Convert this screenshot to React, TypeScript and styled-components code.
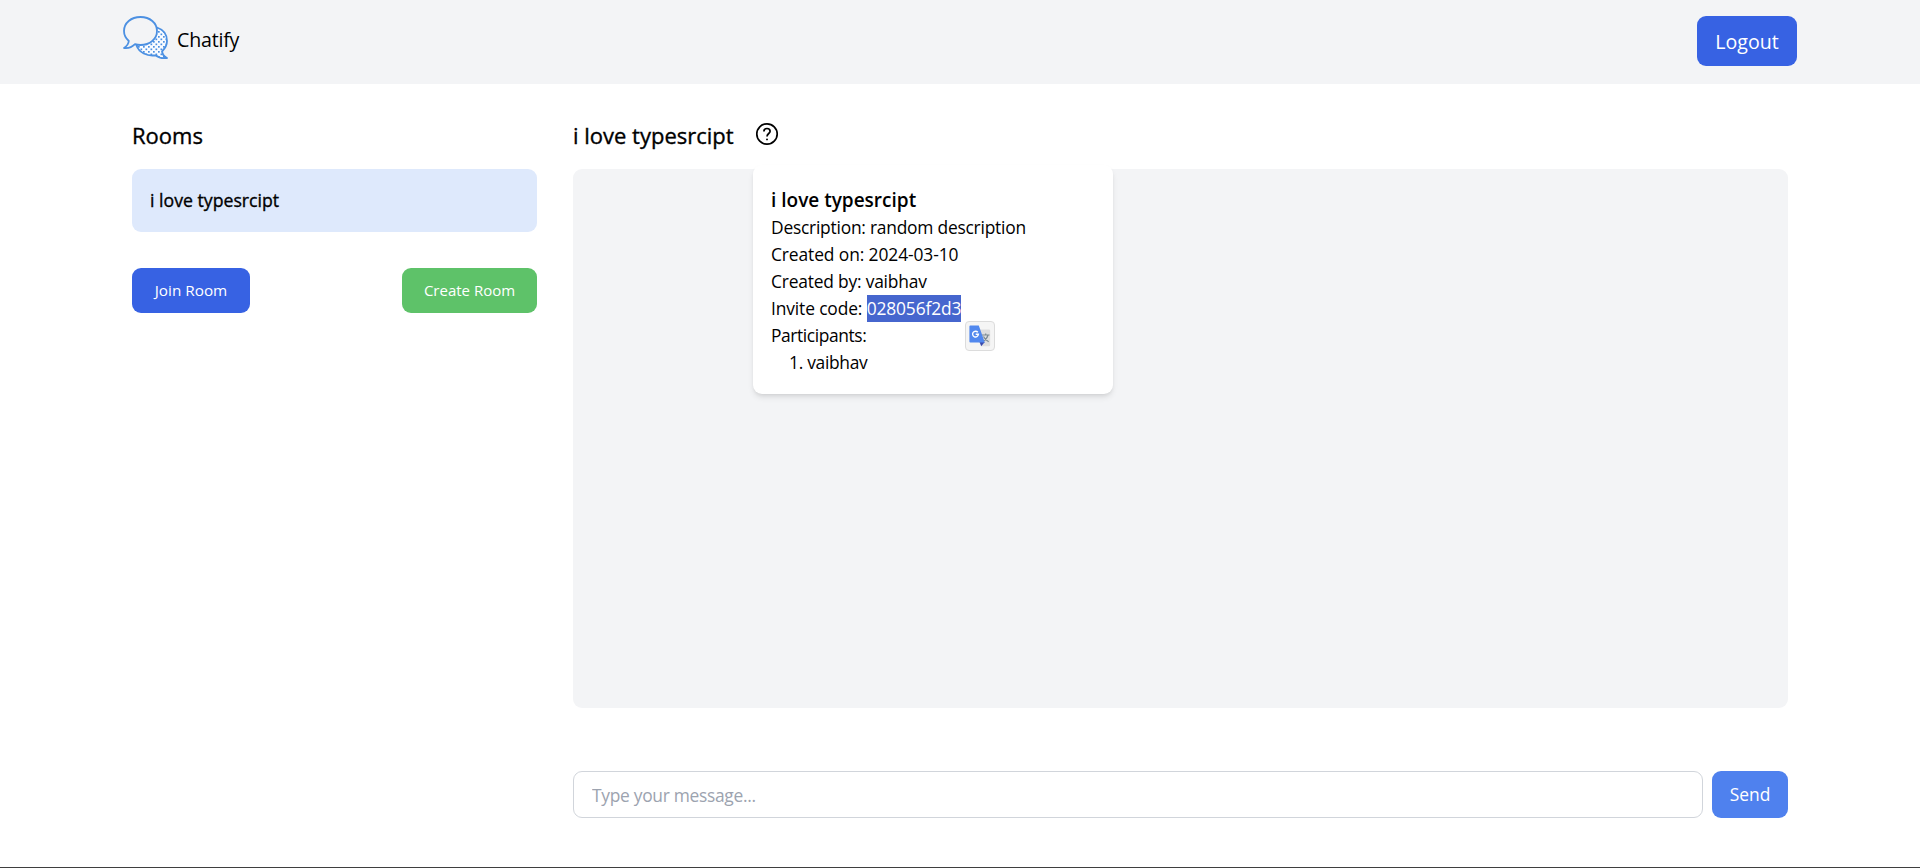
import React from "react";
import styled, { createGlobalStyle, css } from "styled-components";

const GlobalStyle = createGlobalStyle`
  *, *::before, *::after { box-sizing: border-box; }
  body { margin: 0; background: #fff; color: #000; font-family: "Open Sans", "Noto Sans", sans-serif; font-size: 17.4px; line-height: 27px; }
  h1, h2, h3, p, ul, ol { margin: 0; padding: 0; font-weight: 400; }
  button, input { font: inherit; margin: 0; }
`;

const Page = styled.div`
  height: 868px;
  display: flex;
  flex-direction: column;
  border-bottom: 1px solid #3f3f3f;
  overflow: hidden;
`;

const Header = styled.header`
  height: 84px;
  flex: none;
  display: flex;
  align-items: flex-start;
  justify-content: space-between;
  padding: 16px 123px 0;
  background: #f3f4f6;
`;

const Brand = styled.div`
  display: flex;
  align-items: center;
  gap: 9px;
`;

const BrandName = styled.h1`
  font-size: 19.6px;
  line-height: 32px;
  margin-top: 3px;
  letter-spacing: -0.2px;
`;

type Tone = "primary" | "success" | "light";
const tones: Record<Tone, string> = { primary: "#3762e3", success: "#5ec269", light: "#4f81ee" };

const Button = styled.button<{ $tone: Tone; $width: number; $height: number; $size: number; $drop?: number }>`
  width: ${(p) => p.$width}px;
  height: ${(p) => p.$height}px;
  flex: none;
  padding: ${(p) => p.$drop ?? 0}px 0 0;
  border: 0;
  border-radius: 9px;
  color: #fff;
  background: ${(p) => tones[p.$tone]};
  font-size: ${(p) => p.$size}px;
`;

const Main = styled.main`
  flex: 1;
  display: grid;
  grid-template-columns: 405px 1215px;
  column-gap: 36px;
  padding: 36px 132px 0;
`;

const Column = styled.section`
  display: flex;
  flex-direction: column;
`;

const medium = css`
  font-weight: 400;
  -webkit-text-stroke: 0.35px currentColor;
`;

const Heading = styled.h2`
  ${medium}
  height: 31px;
  font-size: 22px;
  line-height: 30px;
`;

const RoomItem = styled.div`
  ${medium}
  height: 63px;
  margin-top: 18px;
  padding: 18px;
  border-radius: 9px;
  background: #dee9fc;
  font-size: 17.7px;
`;

const RoomActions = styled.div`
  display: flex;
  justify-content: space-between;
  margin-top: 36px;
`;

const TitleRow = styled.div`
  display: flex;
  align-items: flex-start;
  justify-content: space-between;
  width: 206px;
  height: 31px;
`;

const HelpIcon = styled.svg`
  width: 24px;
  height: 24px;
  margin-top: 1.5px;
`;

const Messages = styled.div`
  position: relative;
  height: 539px;
  margin-top: 18px;
  border-radius: 9px;
  background: #f3f4f6;
`;

const InfoCard = styled.aside`
  position: absolute;
  left: 180px;
  top: -4px;
  width: 360px;
  height: 229px;
  padding: 21px 18px;
  border-radius: 9px;
  background: #fff;
  box-shadow: 0 4px 6px -1px rgba(0, 0, 0, 0.1), 0 2px 4px -2px rgba(0, 0, 0, 0.1);
`;

const CardTitle = styled.h3`
  font-size: 19px;
  line-height: 28px;
  font-weight: 600;
`;

const Line = styled.p<{ $tracking?: number }>`
  height: 27px;
  white-space: nowrap;
  letter-spacing: ${(p) => p.$tracking ?? -0.2}px;
`;

const Selected = styled.mark`
  display: inline-block;
  height: 27px;
  color: #fff;
  background: #4666ce;
  letter-spacing: -0.15px;
`;

const People = styled.ol`
  padding-left: 18px;
  list-style-position: inside;
  letter-spacing: -0.3px;
`;

const TranslateBubble = styled.div`
  position: absolute;
  left: 212px;
  top: 156px;
  width: 30px;
  height: 30px;
  display: grid;
  place-items: center;
  border: 1px solid #dcdcdc;
  border-radius: 4px;
  background: #f5f5f5;
`;

const Composer = styled.div`
  display: flex;
  gap: 9px;
  margin-top: 63px;
`;

const MessageInput = styled.input`
  flex: 1;
  height: 47px;
  padding: 0 18px;
  border: 1px solid #d1d5db;
  border-radius: 9px;
  outline: none;
  letter-spacing: -0.3px;
  &::placeholder { color: #9ca3af; opacity: 1; }
`;

const Logo = () => (
  <svg width="45" height="44" viewBox="0 0 45 44" fill="none" stroke="#4c90e2" strokeWidth="1.8" strokeLinejoin="round">
    <defs>
      <pattern id="dots" width="5" height="5" patternUnits="userSpaceOnUse" stroke="none">
        <rect width="5" height="5" fill="#fafcff" />
        <rect x="0" y="0" width="1.700" height="1.700" fill="#4c90e2" />
        <rect x="2.500" y="2.500" width="1.700" height="1.700" fill="#4c90e2" />
      </pattern>
    </defs>
    <path d="M34 11.500C40 13.500 44 18.500 44 25C44 29.500 42 32.500 39 35.500C39.500 38.500 41 40.500 44 42C40 42.500 35.500 41.800 32.500 39.300C24 40.500 16 36.500 13.500 29.500Z" fill="url(#dots)" />
    <path d="M17.500 1C27 1 34 7 34 15C34 23 27 29 17.500 29C15.500 29 13.700 28.700 12 28.200C9 31.200 5 32.500 1 32C3.800 30.300 5.500 27.800 5.800 25C2.800 22.300 1 19 1 15C1 7 8 1 17.500 1Z" fill="#f3f4f6" />
  </svg>
);

const TranslateIcon = () => (
  <svg width="22" height="22" viewBox="0 0 22 22">
    <path d="M9 4.500h11a1.200 1.200 0 0 1 1.200 1.200V20a1.200 1.200 0 0 1-1.200 1.200h-7.500z" fill="#dedede" />
    <path d="M13 10h7.500M16.700 8.500V10M19 10.200c-.7 2.800-2.500 4.800-5 6.300M14.500 11.500c1 2.200 2.800 4 5.200 5.200" stroke="#7c8a91" strokeWidth="1.200" fill="none" />
    <path d="M10.500 17h5.300l-3.600 4.200z" fill="#3949ab" />
    <path d="M1.300.5h8.500l6 17H1.300A1 1 0 0 1 .4 16.500v-15A1 1 0 0 1 1.300.5z" fill="#5188ee" />
    <path d="M8.800 7.300A2.900 2.900 0 1 0 9.400 9.300H6.700" stroke="#fff" strokeWidth="1.400" fill="none" />
  </svg>
);

export default function App() {
  return (
    <>
      <GlobalStyle />
      <Page>
        <Header>
          <Brand>
            <Logo />
            <BrandName>Chatify</BrandName>
          </Brand>
          <Button $tone="primary" $width={100} $height={50} $size={19.6} $drop={1}>Logout</Button>
        </Header>
        <Main>
          <Column>
            <Heading>Rooms</Heading>
            <RoomItem>i love typesrcipt</RoomItem>
            <RoomActions>
              <Button $tone="primary" $width={118} $height={45} $size={15.3}>Join Room</Button>
              <Button $tone="success" $width={135} $height={45} $size={15}>Create Room</Button>
            </RoomActions>
          </Column>
          <Column>
            <TitleRow>
              <Heading>i love typesrcipt</Heading>
              <HelpIcon viewBox="0 0 24 24" fill="none" stroke="#000" strokeWidth="1.700">
                <circle cx="12" cy="12" r="10.200" />
                <path d="M8.900 9.400C8.900 7.700 10.200 6.500 12 6.500S15.100 7.600 15.100 9.200C15.100 11.500 12 11.600 12 14.500" />
                <circle cx="12" cy="17.400" r="0.950" fill="#000" stroke="none" />
              </HelpIcon>
            </TitleRow>
            <Messages>
              <InfoCard>
                <CardTitle>i love typesrcipt</CardTitle>
                <Line $tracking={-0.23}>Description: random description</Line>
                <Line $tracking={-0.1}>Created on: 2024-03-10</Line>
                <Line>Created by: vaibhav</Line>
                <Line $tracking={-0.13}>Invite code: <Selected>028056f2d3</Selected></Line>
                <Line $tracking={-0.4}>Participants:</Line>
                <People>
                  <li>vaibhav</li>
                </People>
                <TranslateBubble>
                  <TranslateIcon />
                </TranslateBubble>
              </InfoCard>
            </Messages>
            <Composer>
              <MessageInput placeholder="Type your message..." />
              <Button $tone="light" $width={76} $height={47} $size={17.4}>Send</Button>
            </Composer>
          </Column>
        </Main>
      </Page>
    </>
  );
}
